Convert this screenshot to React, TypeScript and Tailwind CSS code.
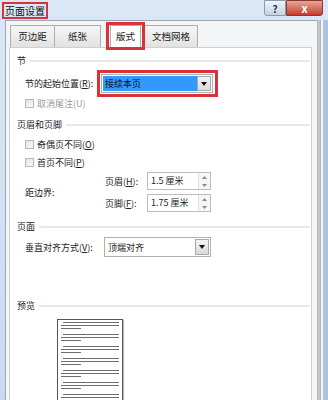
const font = { fontFamily: '"Noto Sans CJK SC", "Noto Sans", sans-serif' };

const SectionHead = ({ title, className = "" }: { title: string; className?: string }) => (
  <div className={"flex items-center h-[13px] " + className}>
    <span className="text-[9px] leading-none text-[#222] whitespace-nowrap">{title}</span>
    <div className="flex-1 h-[2px] bg-[#e8e8e8] ml-[4px] mr-[1px]" />
  </div>
);

const Check = ({ label, disabled }: { label: React.ReactNode; disabled?: boolean }) => (
  <div className="flex items-center h-[13px] pl-[8px]">
    <div className="w-[9px] h-[9px] border border-[#b8b8b8] bg-gradient-to-br from-[#e4e4e4] to-[#fafafa]" />
    <span className={"ml-[3px] text-[9px] leading-none whitespace-nowrap " + (disabled ? "text-[#9a9a9a]" : "text-[#222]")}>
      {label}
    </span>
  </div>
);

const Arrow = () => (
  <div className="w-[14px] h-full bg-gradient-to-b from-[#f4f4f4] to-[#dadada] border border-[#a8a8a8] flex items-center justify-center">
    <svg width="6" height="4" viewBox="0 0 6 4">
      <path d="M0 0 L6 0 L3 4 Z" fill="#111" />
    </svg>
  </div>
);

const Spin = ({ value }: { value: string }) => (
  <div className="w-[64px] h-[18px] border border-[#bcbcbc] bg-white flex">
    <span className="flex-1 text-[9px] leading-[16px] pl-[3px] text-[#222] whitespace-nowrap">{value}</span>
    <div className="w-[12px] flex flex-col border-l border-[#e0e0e0] bg-[#f6f6f6]">
      <div className="flex-1 flex items-center justify-center">
        <svg width="5" height="3" viewBox="0 0 5 3"><path d="M0 3 L2.5 0 L5 3 Z" fill="#8a8a8a" /></svg>
      </div>
      <div className="flex-1 flex items-center justify-center">
        <svg width="5" height="3" viewBox="0 0 5 3"><path d="M0 0 L5 0 L2.5 3 Z" fill="#8a8a8a" /></svg>
      </div>
    </div>
  </div>
);

const u = (c: string) => <span className="underline">{c}</span>;

const tabCls =
  "h-[22px] border border-[#adadad] border-b-0 bg-gradient-to-b from-[#f6f6f6] to-[#e2e2e2] flex items-center justify-center text-[9.5px] text-[#222] whitespace-nowrap";

export default function App() {
  const previewRows = [0, 1, 2, 3, 4, 5, 6];
  return (
    <div style={font} className="w-[328px] h-[400px] overflow-hidden bg-gradient-to-b from-[#dae7f6] to-[#c9daee] flex flex-col">
      {/* title bar */}
      <div className="h-[20px] flex items-start justify-between shrink-0">
        <div className="ml-[2px] mt-[2px] border-2 border-[#d9333a] px-[1px] h-[17px] flex items-center">
          <span className="text-[10px] leading-none text-[#111]">页面设置</span>
        </div>
        <div className="flex mr-[5px]">
          <div className="w-[22px] h-[16px] border border-[#8a9ab0] rounded-bl-[3px] bg-gradient-to-b from-[#eef3f9] to-[#c5d3e4] flex items-center justify-center text-[10px] text-[#334] font-bold">
            ?
          </div>
          <div className="w-[37px] h-[16px] border border-[#8b3a33] rounded-br-[3px] bg-gradient-to-b from-[#e8a496] to-[#c4382a] flex items-center justify-center text-[11px] text-white font-bold">
            x
          </div>
        </div>
      </div>

      {/* body */}
      <div className="flex-1 flex">
        <div className="w-[5px] shrink-0" />
        <div className="flex-1 bg-[#f4f5f7] border-l border-t border-[#9aa6b6] flex flex-col pl-[3px] pr-[5px] pt-[4px]">
          {/* tabs */}
          <div className="flex items-end h-[22px] relative z-10">
            <div className={tabCls + " w-[45px] ml-[1px]"}>页边距</div>
            <div className={tabCls + " w-[46px] border-l-0"}>纸张</div>
            <div className="ml-[5px] border-[3px] border-[#d9333a] h-[28px] -mb-[3px] px-[1px] flex bg-white">
              <div className="w-[31px] h-full border border-[#adadad] border-b-0 bg-white flex items-center justify-center text-[9.5px] text-[#222]">
                版式
              </div>
            </div>
            <div className={tabCls + " w-[53px] border-l-0"}>文档网格</div>
          </div>

          {/* panel */}
          <div className="flex-1 bg-white border border-[#d0d0d0] pl-[7px] pt-[6px] flex flex-col">
            <SectionHead title="节" />
            <div className="flex items-center h-[27px] mt-[3px]">
              <span className="ml-[8px] w-[72px] text-[9px] leading-none text-[#222] whitespace-nowrap">
                节的起始位置({u("R")}):
              </span>
              <div className="border-[3px] border-[#d9333a] w-[121px] h-[27px] p-[1px] flex bg-white">
                <div className="w-[112px] h-full border border-[#b0b0b0] flex p-[1px] bg-white">
                  <div className="flex-1 bg-[#3399ff] flex items-center pl-[2px] text-[9px] leading-none text-[#111]">
                    接续本页
                  </div>
                  <Arrow />
                </div>
              </div>
            </div>
            <Check label={<>取消尾注(U)</>} disabled />

            <SectionHead title="页眉和页脚" className="mt-[8px]" />
            <div className="mt-[7px]">
              <Check label={<>奇偶页不同({u("O")})</>} />
            </div>
            <div className="mt-[5px]">
              <Check label={<>首页不同({u("P")})</>} />
            </div>
            <div className="flex mt-[3px]">
              <div className="w-[88px] pl-[8px] flex items-center">
                <span className="text-[9px] leading-none text-[#222]">距边界:</span>
              </div>
              <div className="flex flex-col gap-[4px]">
                <div className="flex items-center">
                  <span className="w-[42px] text-[9px] leading-none text-[#222] whitespace-nowrap">页眉({u("H")}):</span>
                  <Spin value="1.5 厘米" />
                </div>
                <div className="flex items-center">
                  <span className="w-[42px] text-[9px] leading-none text-[#222] whitespace-nowrap">页脚({u("F")}):</span>
                  <Spin value="1.75 厘米" />
                </div>
              </div>
            </div>

            <SectionHead title="页面" className="mt-[8px]" />
            <div className="flex items-center mt-[4px] h-[20px]">
              <span className="ml-[8px] w-[79px] text-[9px] leading-none text-[#222] whitespace-nowrap">
                垂直对齐方式({u("V")}):
              </span>
              <div className="w-[107px] h-[20px] border border-[#b0b0b0] bg-white flex p-[1px]">
                <div className="flex-1 flex items-center pl-[2px] text-[9px] leading-none text-[#222]">
                  顶端对齐
                </div>
                <Arrow />
              </div>
            </div>

            <SectionHead title="预览" className="mt-[42px]" />
            <div className="ml-[40px] mt-[7px] w-[66px] h-[90px] border border-[#555] bg-white shadow-[1px_1px_1px_rgba(0,0,0,0.25)] px-[3px] pt-[2px] flex flex-col gap-[5px]">
              {previewRows.map((i) => (
                <div key={i} className="flex flex-col gap-[2px]">
                  <div className="h-[1px] bg-[#6e6e6e] ml-[2px]" />
                  <div className="h-[1px] bg-[#6e6e6e]" />
                  <div className="h-[1px] bg-[#6e6e6e] w-[20px]" />
                </div>
              ))}
            </div>
          </div>
        </div>
        {/* right frame */}
        <div className="w-[11px] shrink-0 flex">
          <div className="w-[4px] bg-[#c6c6c6] border-x border-[#b3b3b3]" />
          <div className="w-[2px] bg-[#f5f5f5]" />
          <div className="w-[5px] bg-[#aac1e0]" />
        </div>
      </div>
    </div>
  );
}
